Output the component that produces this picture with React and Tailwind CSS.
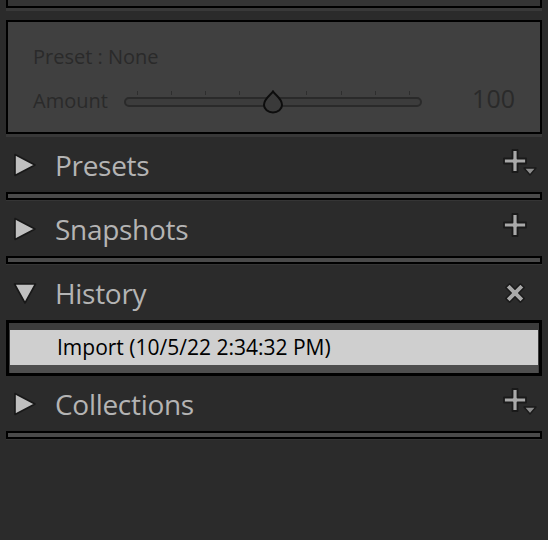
import React from 'react';

const font = { fontFamily: '"Open Sans", "Noto Sans", sans-serif' };

const TriRight = () => (
  <svg width="24" height="24" viewBox="0 0 24 24" className="shrink-0">
    <path d="M2 1.5 L22 12 L2 22.5 Z" fill="#c0c0c0" stroke="#181818" strokeWidth="1.6" strokeLinejoin="round" />
  </svg>
);

const TriDown = () => (
  <svg width="24" height="24" viewBox="0 0 24 24" className="shrink-0">
    <path d="M1.5 3 L22.5 3 L12 22 Z" fill="#c0c0c0" stroke="#181818" strokeWidth="1.6" strokeLinejoin="round" />
  </svg>
);

const Plus = ({ menu }) => (
  <svg width="36" height="32" viewBox="0 0 36 32">
    <path
      d="M9.5 1 H14.5 V9.5 H23 V14.5 H14.5 V23 H9.5 V14.5 H1 V9.5 H9.5 Z"
      fill="#a9a9a9"
      stroke="#1a1a1a"
      strokeWidth="1.8"
      strokeLinejoin="round"
    />
    {menu && <path d="M21 19 L33 19 L27 26 Z" fill="#8c8c8c" stroke="#1a1a1a" strokeWidth="1.4" strokeLinejoin="round" />}
  </svg>
);

const Cross = () => (
  <svg width="26" height="26" viewBox="0 0 24 24">
    <path
      d="M3.5 7 L7 3.5 L12 8.5 L17 3.5 L20.5 7 L15.5 12 L20.5 17 L17 20.5 L12 15.5 L7 20.5 L3.5 17 L8.5 12 Z"
      fill="#a9a9a9"
      stroke="#1a1a1a"
      strokeWidth="1.4"
      strokeLinejoin="round"
    />
  </svg>
);

const Separator = () => (
  <div className="mx-[6px]">
    <div className="h-[8px] border-2 border-black bg-[#4a4a4a]" />
    <div className="h-[1px] bg-[#353535]" />
  </div>
);

const Header = ({ title, open, icon }) => (
  <div className="h-[55px] flex items-center pl-[13px] pr-[9px]">
    {open ? <TriDown /> : <TriRight />}
    <span className="ml-[18px] text-[28px] text-[#b4b4b4] leading-none tracking-[-0.3px]">{title}</span>
    <div className="ml-auto flex items-center">{icon}</div>
  </div>
);

const ticks = [137, 171, 205, 239, 306, 341, 375, 409];

export default function App() {
  return (
    <div className="w-[548px] h-[540px] bg-[#2b2b2b] overflow-hidden" style={font}>
      {/* bottom edge of the panel above */}
      <div className="mx-[6px]">
        <div className="h-[8px] border-x-2 border-b-2 border-black bg-[#343434]" />
        <div className="h-[3px] bg-[#393939]" />
      </div>

      {/* preset box */}
      <div className="mx-[6px] mt-[9px] h-[114px] border-2 border-black bg-[#404040] pl-[25px] pr-[25px] pt-[21px]">
        <div className="text-[20px] leading-[28px] text-[#2a2a2a]">Preset : None</div>
        <div className="mt-[16px] flex items-center h-[28px]">
          <span className="text-[20px] text-[#2a2a2a] w-[91px]">Amount</span>
          <div className="relative w-[298px] h-[28px]">
            {ticks.map((t) => (
              <div key={t} className="absolute top-[4px] w-[1px] h-[4px] bg-[#2e2e2e]" style={{ left: t - 124 }} />
            ))}
            <div className="absolute left-0 right-0 top-[10px] h-[10px] rounded-full border-2 border-[#2a2a2a] bg-[#3c3c3c]" />
            <svg className="absolute top-[3px]" style={{ left: 138 }} width="22" height="24" viewBox="0 0 22 24">
              <path d="M11 1.5 C13 5 20 8.5 20 15 A9 7.5 0 0 1 2 15 C2 8.5 9 5 11 1.5 Z" fill="#3a3a3a" stroke="#0d0d0d" strokeWidth="2" />
            </svg>
          </div>
          <span className="ml-auto -mt-[4px] text-[25px] text-[#2a2a2a]">100</span>
        </div>
      </div>
      <div className="mx-[6px] h-[3px] bg-[#383838]" />

      <Header title="Presets" icon={<Plus menu />} />
      <Separator />
      <Header title="Snapshots" icon={<Plus />} />
      <Separator />
      <Header title="History" open icon={<div className="mr-[11px]"><Cross /></div>} />

      <div className="mx-[6px] border-[3px] border-black bg-[#3c3c3c] pt-[7px] px-[1px]">
        <div className="h-[35px] bg-[#cfcfcf] flex items-center pl-[47px] text-[21px] text-black">
          Import (10/5/22 2:34:32 PM)
        </div>
        <div className="h-[8px] bg-[#4e4e4e]" />
      </div>

      <Header title="Collections" icon={<Plus menu />} />
      <Separator />
    </div>
  );
}
